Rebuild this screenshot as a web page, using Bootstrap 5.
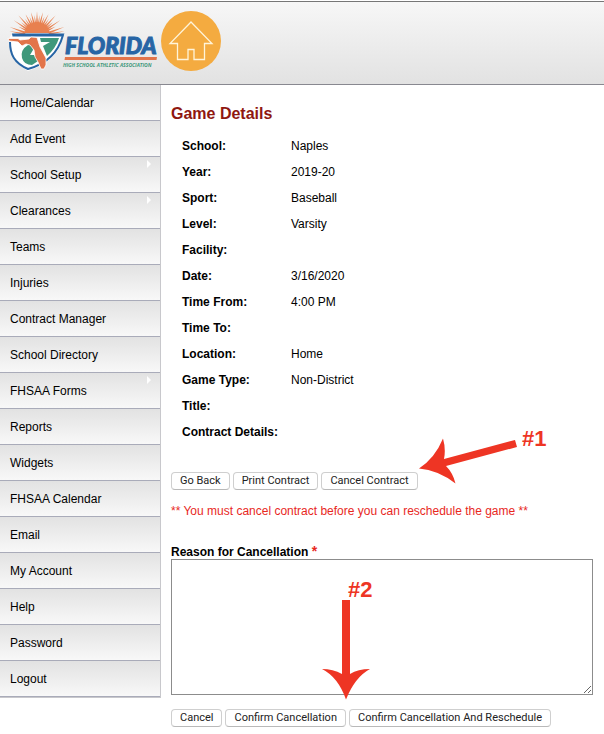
<!DOCTYPE html>
<html lang="en">
<head>
<meta charset="utf-8">
<meta name="viewport" content="width=device-width, initial-scale=1">
<title>Game Details</title>
<link href="https://cdn.jsdelivr.net/npm/bootstrap@5.3.0/dist/css/bootstrap.min.css" rel="stylesheet">
<style>
body { font: 12px/18px "Liberation Sans", Arial, sans-serif; color: #000; background: #fff; }
.site-head { height: 84px; margin-top: 1px; padding-left: 5px; border-top: 1px solid #777; border-bottom: 1px solid #888890; background: linear-gradient(#f7f7f7, #e2e2e2); }
.brand-art { width: 156px; height: 82px; }
.home-link { margin-top: 9px; }
.home-link svg { width: 60px; height: 60px; }
.side { width: 161px; border-right: 1px solid #c8c8cc; border-bottom: 1px solid #c8c8cc; }
.side .nav-link { height: 36px; padding: 0 10px; line-height: 36px; color: #000; border-bottom: 1px solid #a9abb9; background: linear-gradient(#e2e2e2, #f8f8f8); }
.has-sub::after { content: ""; position: absolute; right: 9px; top: 3px; border: 4px solid transparent; border-left-color: #fff; border-right: 0; }
.content { padding: 20px 11px 7px 10px; min-width: 0; }
h1 { font-size: 16px; line-height: 18px; font-weight: 700; color: #8f1710; margin-bottom: 10px; }
.facts { padding-left: 11px; margin-bottom: 27px; }
.facts div { height: 26px; line-height: 26px; }
.facts dt { width: 109px; }
.facts dd { margin: 0; }
.bar { gap: 3px; }
.bar .btn { font: 11px/16px Roboto, sans-serif; padding: 0 8px; color: #222; background: #fff; border: 1px solid #cfcfcf; border-bottom-color: #b9b9b9; border-radius: 4px; }
.warn { color: #e8281e; margin: 12px 0 24px; }
.reason { height: 15px; line-height: 15px; }
.req { color: #e8281e; font-size: 14px; line-height: 14px; }
.reason-box { height: 136px; padding: 4px; font: inherit; border: 1px solid #8c8c8c; border-radius: 0; resize: both; margin-bottom: 14px; }
.note { position: absolute; overflow: visible; pointer-events: none; fill: #ee3524; font: 700 22px "Liberation Sans", Arial, sans-serif; }
.note-1 { left: 247px; top: -46px; width: 128px; height: 56px; }
.note-2 { left: 150px; top: 20px; width: 54px; height: 120px; }
</style>
<script src="https://cdn.jsdelivr.net/npm/bootstrap@5.3.0/dist/js/bootstrap.bundle.min.js"></script>
</head>
<body>
<header class="site-head d-flex">
  <svg class="brand-art flex-shrink-0" viewBox="5 2 156 82" role="img" aria-label="Florida High School Athletic Association">
    <defs>
      <path id="ray" d="M36 24 37 11.500 38 24Z"/>
      <path id="ray-short" d="M36.2 24 37 15 37.8 24Z"/>
      <path id="ray-low" d="M36 24 37 8 38 24Z"/>
    </defs>
    <g fill="#e8804f">
      <use href="#ray"/>
      <use href="#ray" transform="rotate(-14 37 36)"/><use href="#ray" transform="rotate(14 37 36)"/>
      <use href="#ray" transform="rotate(-28 37 36)"/><use href="#ray" transform="rotate(28 37 36)"/>
      <use href="#ray-low" transform="rotate(-42 37 36)"/><use href="#ray-low" transform="rotate(42 37 36)"/>
      <use href="#ray-low" transform="rotate(-56 37 36)"/><use href="#ray-low" transform="rotate(56 37 36)"/>
      <use href="#ray-low" transform="rotate(-70 37 37)"/><use href="#ray-low" transform="rotate(70 37 37)"/>
      <use href="#ray-low" transform="rotate(-80 37 36)"/><use href="#ray-low" transform="rotate(80 37 36)"/>
      <use href="#ray-short" transform="rotate(-7 37 36)"/><use href="#ray-short" transform="rotate(7 37 36)"/>
      <use href="#ray-short" transform="rotate(-21 37 36)"/><use href="#ray-short" transform="rotate(21 37 36)"/>
      <use href="#ray-short" transform="rotate(-35 37 36)"/><use href="#ray-short" transform="rotate(35 37 36)"/>
      <use href="#ray-short" transform="rotate(-49 37 36)"/><use href="#ray-short" transform="rotate(49 37 36)"/>
      <use href="#ray-short" transform="rotate(-63 37 36)"/><use href="#ray-short" transform="rotate(63 37 36)"/>
      <path d="M24 33Q27 22 37 22 47 22 50 33Z"/>
    </g>
    <path d="M11 35H63Q60 60 28 71 9 61 9 39Z" fill="#fff"/>
    <path d="M12 33.500H64.500L63 36.500H12.500Z" fill="#2765a5"/>
    <path d="M63 35C59 50 50 63 28 69 14 63 10 54 10 42" fill="none" stroke="#2765a5" stroke-width="2"/>
    <path d="M40 38H59Q56 48 47 56L43 46 50 42H41ZM31 42 28 45Q20 50 22 58 24 65 32 65L38 61 34 55H30L33 50Z" fill="#3f987b"/>
    <path d="M8 38.500H18L20 40 29 39 31 37 37 37.500 40 47 46 58V65L44 69H41L38 62 35 57 34 50 30 45 26 44 22 46 18 42 9 41Z" fill="#e2744a" stroke="#fff" stroke-width=".8"/>
    <text x="65" y="54" font-family="Lato, sans-serif" font-size="23" font-weight="900" font-style="italic" fill="#2765a5" stroke="#2765a5">FLORIDA</text>
    <path d="M65 57H157L156.500 60H64.500Z" fill="#e2744a"/>
    <text x="63" y="67" font-family="Open Sans, sans-serif" font-size="5" font-weight="700" font-style="italic" fill="#3f987b">HIGH SCHOOL ATHLETIC ASSOCIATION</text>
  </svg>
  <a class="home-link flex-shrink-0" href="#" aria-label="Home">
    <svg class="d-block" viewBox="0 0 60 60"><circle cx="30" cy="30" r="30" fill="#f4ab40"/><path d="M30 11 51 32.500H43.500V48.500H33V38.500H27V48.500H16.500V32.500H9Z" fill="none" stroke="#fff4d9" stroke-width="1.300"/></svg>
  </a>
</header>
<div class="d-flex align-items-start">
  <nav class="side nav flex-column flex-shrink-0" aria-label="Main">
    <a class="nav-link" href="#">Home/Calendar</a>
    <a class="nav-link" href="#">Add Event</a>
    <a class="nav-link has-sub position-relative" href="#">School Setup</a>
    <a class="nav-link has-sub position-relative" href="#">Clearances</a>
    <a class="nav-link" href="#">Teams</a>
    <a class="nav-link" href="#">Injuries</a>
    <a class="nav-link" href="#">Contract Manager</a>
    <a class="nav-link" href="#">School Directory</a>
    <a class="nav-link has-sub position-relative" href="#">FHSAA Forms</a>
    <a class="nav-link" href="#">Reports</a>
    <a class="nav-link" href="#">Widgets</a>
    <a class="nav-link" href="#">FHSAA Calendar</a>
    <a class="nav-link" href="#">Email</a>
    <a class="nav-link" href="#">My Account</a>
    <a class="nav-link" href="#">Help</a>
    <a class="nav-link" href="#">Password</a>
    <a class="nav-link" href="#">Logout</a>
  </nav>
  <main class="content flex-grow-1">
    <h1>Game Details</h1>
    <dl class="facts">
      <div class="d-flex"><dt>School:</dt><dd>Naples</dd></div>
      <div class="d-flex"><dt>Year:</dt><dd>2019-20</dd></div>
      <div class="d-flex"><dt>Sport:</dt><dd>Baseball</dd></div>
      <div class="d-flex"><dt>Level:</dt><dd>Varsity</dd></div>
      <div class="d-flex"><dt>Facility:</dt><dd></dd></div>
      <div class="d-flex"><dt>Date:</dt><dd>3/16/2020</dd></div>
      <div class="d-flex"><dt>Time From:</dt><dd>4:00 PM</dd></div>
      <div class="d-flex"><dt>Time To:</dt><dd></dd></div>
      <div class="d-flex"><dt>Location:</dt><dd>Home</dd></div>
      <div class="d-flex"><dt>Game Type:</dt><dd>Non-District</dd></div>
      <div class="d-flex"><dt>Title:</dt><dd></dd></div>
      <div class="d-flex"><dt>Contract Details:</dt><dd></dd></div>
    </dl>
    <div class="bar d-flex position-relative">
      <button type="button" class="btn">Go Back</button>
      <button type="button" class="btn">Print Contract</button>
      <button type="button" class="btn">Cancel Contract</button>
      <svg class="note note-1" viewBox="418 426 128 56"><path d="M419 468.500Q435 458 443 438.500 446 449 444 459L515 440 517 447 446 466Q453 473 455.500 483.500 438 470 419 468.500Z"/><text x="522" y="446">#1</text></svg>
    </div>
    <p class="warn">** You must cancel contract before you can reschedule the game **</p>
    <form>
      <label class="reason d-block fw-bold" for="reason">Reason for Cancellation <span class="req">*</span></label>
      <div class="position-relative">
        <textarea class="form-control reason-box" id="reason"></textarea>
        <svg class="note note-2" viewBox="321 579 54 120"><path d="M342 600H350V674Q358 669 370 669 355 677 346 699.500 338 677 322 669 333 669 342 674Z"/><text x="348" y="597">#2</text></svg>
      </div>
      <div class="bar d-flex">
        <button type="button" class="btn">Cancel</button>
        <button type="button" class="btn">Confirm Cancellation</button>
        <button type="button" class="btn">Confirm Cancellation And Reschedule</button>
      </div>
    </form>
  </main>
</div>
</body>
</html>
